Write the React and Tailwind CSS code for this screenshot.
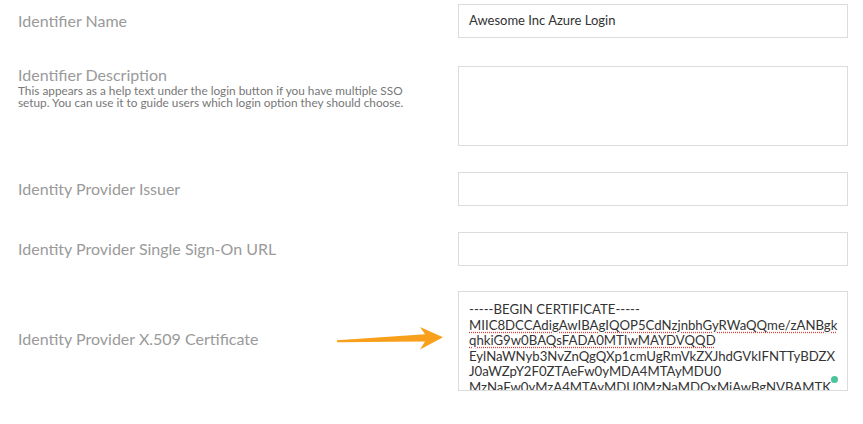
import React from 'react';

const font = { fontFamily: 'Lato, "Open Sans", sans-serif' };

const certLines = [
  { text: '-----BEGIN CERTIFICATE-----', spell: false },
  { text: 'MIIC8DCCAdigAwIBAgIQOP5CdNzjnbhGyRWaQQme/zANBgk', spell: true },
  { text: 'qhkiG9w0BAQsFADA0MTIwMAYDVQQD', spell: true },
  { text: 'EylNaWNyb3NvZnQgQXp1cmUgRmVkZXJhdGVkIFNTTyBDZX', spell: false },
  { text: 'J0aWZpY2F0ZTAeFw0yMDA4MTAyMDU0', spell: false },
  { text: 'MzNaFw0yMzA4MTAyMDU0MzNaMDQxMjAwBgNVBAMTK', spell: false },
];

function Label({ children }) {
  return <div className="text-[16px] leading-[18px] text-[#9a9a9a]">{children}</div>;
}

function TextBox({ value }) {
  return (
    <div className="w-[390px] h-[34px] border border-[#dcdcdc] bg-white px-[10px] flex items-center text-[13px] text-[#333]">
      {value}
    </div>
  );
}

function Arrow() {
  return (
    <svg className="absolute left-[312px] top-[33px]" width="120" height="32" viewBox="330 325 120 32">
      <path
        d="M337 341.2 L425 335.2 L420 328 L443 338.3 L420 350.5 L425 342.6 L337 343.2 Z"
        fill="#f8a01c"
      />
    </svg>
  );
}

export default function App() {
  return (
    <div className="w-[863px] h-[424px] bg-white overflow-hidden pl-[18px] pt-[4px]" style={font}>
      <div className="flex justify-between w-[830px] items-center">
        <Label>Identifier Name</Label>
        <TextBox value="Awesome Inc Azure Login" />
      </div>

      <div className="flex justify-between w-[830px] mt-[28px]">
        <div>
          <Label>Identifier Description</Label>
          <p className="text-[11.8px] leading-[12px] text-[#777] mt-[1px] w-[400px]">
            This appears as a help text under the login button if you have multiple SSO setup. You can use it to guide users which login option they should choose.
          </p>
        </div>
        <div className="w-[390px] h-[80px] border border-[#dcdcdc]" />
      </div>

      <div className="flex justify-between w-[830px] items-center mt-[26px]">
        <Label>Identity Provider Issuer</Label>
        <TextBox value="" />
      </div>

      <div className="flex justify-between w-[830px] items-center mt-[26px]">
        <Label>Identity Provider Single Sign-On URL</Label>
        <TextBox value="" />
      </div>

      <div className="relative flex justify-between w-[830px] items-center mt-[25px]">
        <div className="pb-[4px]">
          <Label>Identity Provider X.509 Certificate</Label>
        </div>
        <Arrow />
        <div className="relative w-[390px] h-[100px] border border-[#dcdcdc] overflow-hidden pl-[10px] pt-[10px] text-[13.2px] leading-[15.5px] text-[#333]">
          {certLines.map((l, i) => (
            <div key={i} className="whitespace-nowrap">
              {l.spell ? (
                <span className="underline decoration-dotted decoration-[#e0413a] underline-offset-[2px]">{l.text}</span>
              ) : (
                l.text
              )}
            </div>
          ))}
          <span className="absolute right-[9px] top-[84px] w-[7px] h-[7px] rounded-full bg-[#4cc49a]" />
        </div>
      </div>
    </div>
  );
}
